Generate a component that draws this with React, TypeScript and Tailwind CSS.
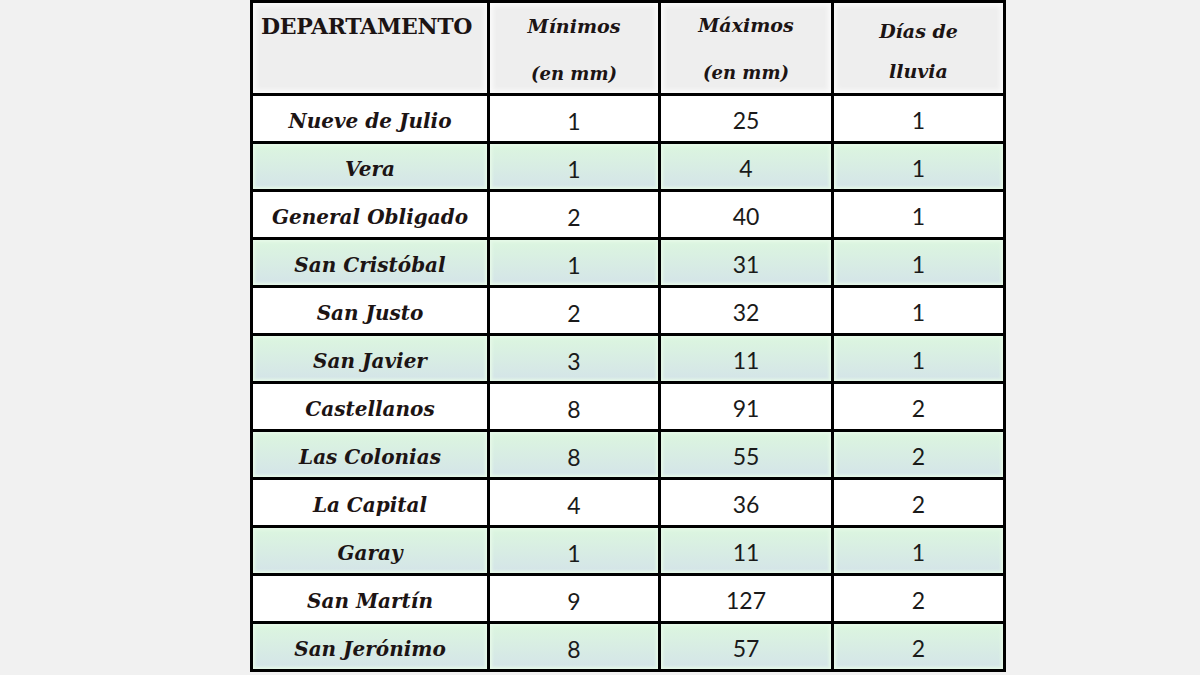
const rows: [string, string, string, string][] = [
  ["Nueve de Julio", "1", "25", "1"],
  ["Vera", "1", "4", "1"],
  ["General Obligado", "2", "40", "1"],
  ["San Cristóbal", "1", "31", "1"],
  ["San Justo", "2", "32", "1"],
  ["San Javier", "3", "11", "1"],
  ["Castellanos", "8", "91", "2"],
  ["Las Colonias", "8", "55", "2"],
  ["La Capital", "4", "36", "2"],
  ["Garay", "1", "11", "1"],
  ["San Martín", "9", "127", "2"],
  ["San Jerónimo", "8", "57", "2"],
];

const serif = "font-['DejaVu_Serif',serif]";
const num = "font-['Lato',sans-serif]";

function HeadCell({ children, className = "" }: { children: React.ReactNode; className?: string }) {
  return (
    <div
      className={`bg-[#eeeeee] shadow-[inset_0_0_4px_3px_#fafafa] text-[#1c1414] ${serif} font-bold ${className}`}
    >
      {children}
    </div>
  );
}

export default function App() {
  return (
    <main className="w-[1200px] h-[675px] bg-[#f1f1f1] overflow-hidden">
      <div className="ml-[250px] w-[756px] grid grid-cols-[234px_168px_170px_169px] gap-[3px] p-[3px] bg-black">
        <HeadCell className="h-[90px] px-2 pt-[9px] text-[22px] leading-7 tracking-[-0.3px]">
          DEPARTAMENTO
        </HeadCell>
        <HeadCell className="h-[90px] flex flex-col items-center pt-[9px] italic text-[19px]">
          <span className="leading-7">Mínimos</span>
          <span className="mt-5 leading-7 text-[18px]">(en mm)</span>
        </HeadCell>
        <HeadCell className="h-[90px] flex flex-col items-center pt-[8px] italic text-[19px]">
          <span className="leading-7">Máximos</span>
          <span className="mt-5 leading-7 text-[18px]">(en mm)</span>
        </HeadCell>
        <HeadCell className="h-[90px] flex flex-col items-center pt-[14px] italic text-[19px]">
          <span className="leading-7">Días de</span>
          <span className="mt-3 leading-7">lluvia</span>
        </HeadCell>

        {rows.map(([name, min, max, days], i) => {
          const bg =
            i % 2 === 1
              ? "bg-gradient-to-b from-[#dcf6df] to-[#d4e4e8] shadow-[inset_0_0_3px_2px_#e6f9e8]"
              : "bg-white";
          return [
            <div
              key={name}
              className={`h-[45px] flex items-center justify-center pt-1 ${bg} ${serif} font-bold italic text-[20px] text-[#1c1414]`}
            >
              {name}
            </div>,
            <div
              key={name + "-min"}
              className={`h-[45px] flex items-center justify-center pt-[6px] ${bg} ${num} text-[23px] text-[#1a1a1a]`}
            >
              {min}
            </div>,
            <div
              key={name + "-max"}
              className={`h-[45px] flex items-center justify-center pt-1 ${bg} ${num} text-[23px] text-[#1a1a1a]`}
            >
              {max}
            </div>,
            <div
              key={name + "-days"}
              className={`h-[45px] flex items-center justify-center pt-1 ${bg} ${num} text-[23px] text-[#1a1a1a]`}
            >
              {days}
            </div>,
          ];
        })}
      </div>
    </main>
  );
}
